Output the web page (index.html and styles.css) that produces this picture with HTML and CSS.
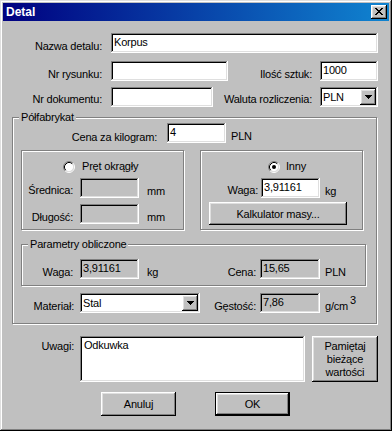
FILE: index.html
```html
<!DOCTYPE html>
<html lang="pl">
<head>
  <meta charset="UTF-8" />
  <title>Detal</title>
  <link rel="stylesheet" href="styles.css">
</head>
<body>
  <div class="window">
    <!-- Title bar -->
    <div class="titlebar">
      <span class="title">Detal</span>
      <span class="btn close-btn">
        <svg width="8" height="7" viewBox="0 0 8 7" shape-rendering="crispEdges"><path d="M0 0h2v1H0zM6 0h2v1H6zM1 1h2v1H1zM5 1h2v1H5zM2 2h4v1H2zM3 3h2v1H3zM2 4h4v1H2zM1 5h2v1H1zM5 5h2v1H5zM0 6h2v1H0zM6 6h2v1H6z"/></svg>
      </span>
    </div>

    <div class="client">
      <div class="row row-wide">
        <span class="lbl cell-a">Nazwa detalu:</span>
        <span class="field f-name">Korpus</span>
      </div>

      <div class="row row-wide r-draw">
        <span class="lbl cell-a">Nr rysunku:</span>
        <span class="field f-draw"></span>
        <span class="lbl cell-b">Ilość sztuk:</span>
        <span class="field f-small">1000</span>
      </div>

      <div class="row row-wide r-doc">
        <span class="lbl lbl-low cell-a">Nr dokumentu:</span>
        <span class="field f-doc"></span>
        <span class="lbl lbl-low cell-b">Waluta rozliczenia:</span>
        <span class="field combo f-small">
          <span class="combo-text">PLN</span>
          <span class="btn drop"><svg width="7" height="4" viewBox="0 0 7 4" shape-rendering="crispEdges"><path d="M0 0h7v1H0zM1 1h5v1H1zM2 2h3v1H2zM3 3h1v1H3z"/></svg></span>
        </span>
      </div>

      <!-- Półfabrykat -->
      <div class="group g-main">
        <span class="legend">Półfabrykat</span>

        <div class="row r-price">
          <span class="lbl lbl-price cell-price">Cena za kilogram:</span>
          <span class="field f-price">4</span>
          <span class="lbl unit u-price">PLN</span>
        </div>

        <div class="inner-row">
          <div class="group box">
            <div class="radio-row r-left">
              <svg class="radio" width="12" height="12" viewBox="0 0 12 12">
                <circle cx="6" cy="6" r="4.5" fill="#fff"/>
                <path d="M2.11 9.89A5.5 5.5 0 0 1 9.89 2.11" fill="none" stroke="#808080"/>
                <path d="M9.89 2.11A5.5 5.5 0 0 1 2.11 9.89" fill="none" stroke="#fff"/>
                <path d="M2.82 9.18A4.5 4.5 0 0 1 9.18 2.82" fill="none" stroke="#000"/>
                <path d="M9.18 2.82A4.5 4.5 0 0 1 2.82 9.18" fill="none" stroke="#dfdfdf"/>
              </svg>
              <span>Pręt okrągły</span>
            </div>
            <div class="row r-sub1">
              <span class="lbl lbl-s cell-c">Średnica:</span>
              <span class="field ro f-val"></span>
              <span class="lbl unit u-mm">mm</span>
            </div>
            <div class="row r-sub2">
              <span class="lbl cell-c">Długość:</span>
              <span class="field ro f-val"></span>
              <span class="lbl unit u-mm">mm</span>
            </div>
          </div>

          <div class="group box">
            <div class="radio-row r-right">
              <svg class="radio" width="12" height="12" viewBox="0 0 12 12">
                <circle cx="6" cy="6" r="4.5" fill="#fff"/>
                <path d="M2.11 9.89A5.5 5.5 0 0 1 9.89 2.11" fill="none" stroke="#808080"/>
                <path d="M9.89 2.11A5.5 5.5 0 0 1 2.11 9.89" fill="none" stroke="#fff"/>
                <path d="M2.82 9.18A4.5 4.5 0 0 1 9.18 2.82" fill="none" stroke="#000"/>
                <path d="M9.18 2.82A4.5 4.5 0 0 1 2.82 9.18" fill="none" stroke="#dfdfdf"/>
                <circle cx="6" cy="6" r="2" fill="#000"/>
              </svg>
              <span>Inny</span>
            </div>
            <div class="row r-sub1">
              <span class="lbl lbl-s cell-d">Waga:</span>
              <span class="field f-val">3,91161</span>
              <span class="lbl unit u-kg">kg</span>
            </div>
            <span class="btn calc">Kalkulator masy...</span>
          </div>
        </div>

        <!-- Parametry obliczone -->
        <div class="group g-calc">
          <span class="legend">Parametry obliczone</span>
          <div class="row r-calc">
            <span class="lbl cell-c">Waga:</span>
            <span class="field ro f-val">3,91161</span>
            <span class="lbl unit u-kg2">kg</span>
            <span class="lbl cell-e">Cena:</span>
            <span class="field ro f-wide">15,65</span>
            <span class="lbl unit u-right">PLN</span>
          </div>
        </div>

        <div class="row r-mat">
          <span class="lbl cell-f">Materiał:</span>
          <span class="field combo f-mat">
            <span class="combo-text">Stal</span>
            <span class="btn drop"><svg width="7" height="4" viewBox="0 0 7 4" shape-rendering="crispEdges"><path d="M0 0h7v1H0zM1 1h5v1H1zM2 2h3v1H2zM3 3h1v1H3z"/></svg></span>
          </span>
          <span class="lbl cell-g">Gęstość:</span>
          <span class="field ro f-wide">7,86</span>
          <span class="lbl unit u-right">g/cm<sup>3</sup></span>
        </div>
      </div>

      <div class="row r-notes">
        <span class="lbl cell-h">Uwagi:</span>
        <span class="field memo">Odkuwka</span>
        <span class="btn remember">Pamiętaj<br>bieżące<br>wartości</span>
      </div>

      <div class="row r-actions">
        <span class="btn action">Anuluj</span>
        <span class="btn action default">OK</span>
      </div>
    </div>
  </div>
</body>
</html>
```

FILE: styles.css
```css
* {
  box-sizing: border-box;
}

body {
  margin: 0;
  background: #c0c0c0;
  color: #000;
  font-family: "Liberation Sans", Arial, sans-serif;
  font-size: 11px;
  letter-spacing: -0.2px;
}

.window {
  width: 392px;
  height: 431px;
  padding: 3px 3px 0 3px;
  background: #c0c0c0;
  box-shadow: inset -1px -1px #000, inset 1px 1px #dfdfdf, inset -2px -2px #808080, inset 2px 2px #fff;
}

.titlebar {
  height: 18px;
  display: flex;
  align-items: center;
  justify-content: space-between;
  padding: 0 2px 0 3px;
  background: linear-gradient(to right, #000080, #1084d0);
  color: #fff;
  font-size: 12px;
  font-weight: bold;
  letter-spacing: 0;
}

.btn {
  background: #c0c0c0;
  box-shadow: inset -1px -1px #000, inset 1px 1px #fff, inset -2px -2px #808080, inset 2px 2px #dfdfdf;
  display: flex;
  align-items: center;
  justify-content: center;
}

.close-btn {
  display: block;
  width: 16px;
  height: 14px;
  padding: 3px 0 0 4px;
}

.close-btn svg {
  display: block;
}

.client {
  padding-top: 12px;
}

/* rows and labels */
.row {
  display: flex;
  height: 20px;
}

.row-wide {
  width: 375px;
}

.lbl {
  line-height: 13px;
  padding-top: 7px;
  white-space: nowrap;
}

.lbl-low {
  padding-top: 6px;
}

.lbl-s {
  padding-top: 6px;
}

.lbl-price {
  padding-top: 8px;
}

.cell-a {
  width: 99px;
  margin-right: 9px;
  text-align: right;
}

.cell-b {
  flex: 1;
  margin-right: 8px;
  text-align: right;
}

.cell-c {
  width: 51px;
  margin-right: 7px;
  text-align: right;
}

.cell-d {
  width: 57px;
  margin-right: 3px;
  text-align: right;
}

.cell-e {
  width: 77px;
  margin-right: 4px;
  text-align: right;
}

.cell-f {
  width: 61px;
  margin-right: 6px;
  text-align: right;
}

.cell-g {
  width: 56px;
  margin-right: 4px;
  text-align: right;
}

.cell-h {
  width: 71px;
  margin-right: 6px;
  padding-top: 4px;
  text-align: right;
}

.cell-price {
  width: 144px;
  margin-right: 10px;
  text-align: right;
}

.unit {
  padding-left: 5px;
}

.u-price {
  padding-left: 5px;
}

.u-mm {
  padding-left: 8px;
}

.u-kg {
  padding-left: 5px;
}

.u-kg2 {
  width: 40px;
  padding-left: 8px;
}

.u-right {
  padding-left: 5px;
}

sup {
  font-size: 11px;
  vertical-align: 6px;
  line-height: 0;
  margin-left: 2px;
}

/* sunken fields */
.field {
  height: 20px;
  padding: 0 3px;
  line-height: 19px;
  background: #fff;
  white-space: nowrap;
  box-shadow: inset -1px -1px #fff, inset 1px 1px #808080, inset -2px -2px #dfdfdf, inset 2px 2px #000;
}

.field.ro {
  background: #c0c0c0;
}

.f-name { width: 267px; }
.f-draw { width: 117px; }
.f-doc { width: 102px; }
.f-small { width: 58px; }
.f-price { width: 59px; }
.f-val { width: 59px; }
.f-wide { width: 60px; }
.f-mat { width: 120px; }

.combo {
  display: flex;
  justify-content: space-between;
  padding: 2px;
  line-height: 16px;
}

.combo-text {
  padding-left: 1px;
}

.drop {
  width: 16px;
  height: 16px;
}

.drop svg {
  display: block;
}

/* group boxes */
.group {
  border: 1px solid #808080;
  box-shadow: inset 1px 1px #fff, 1px 1px #fff;
}

.legend {
  display: block;
  width: max-content;
  height: 13px;
  line-height: 13px;
  margin: -7px 0 -6px 6px;
  padding: 0 2px;
  background: #c0c0c0;
}

.g-main {
  width: 365px;
  height: 207px;
  margin: 10px 0 0 9px;
}

.r-draw {
  margin-top: 8px;
}

.r-doc {
  margin-top: 6px;
}

.r-price {
  margin-top: 5px;
}

.inner-row {
  display: flex;
  gap: 16px;
  margin: 7px 0 0 8px;
}

.box {
  width: 163px;
  height: 80px;
}

.radio-row {
  display: flex;
  align-items: center;
  gap: 7px;
  height: 13px;
  line-height: 13px;
  margin-top: 9px;
}

.radio {
  display: block;
  flex: none;
}

.r-left {
  padding-left: 41px;
}

.r-right {
  padding-left: 67px;
  gap: 6px;
}

.r-sub1 {
  margin-top: 5px;
}

.r-sub2 {
  margin-top: 6px;
}

.calc {
  width: 138px;
  height: 23px;
  margin: 4px 0 0 8px;
}

.g-calc {
  width: 345px;
  height: 42px;
  margin: 14px 0 0 8px;
}

.r-calc {
  margin-top: 14px;
}

.r-mat {
  margin-top: 7px;
}

/* notes and buttons */
.r-notes {
  height: 46px;
  margin-top: 12px;
}

.memo {
  width: 225px;
  height: 46px;
  padding: 2px 4px;
  line-height: 15px;
}

.remember {
  width: 66px;
  height: 46px;
  margin-left: 7px;
  text-align: center;
  line-height: 13px;
}

.r-actions {
  height: 24px;
  margin-top: 10px;
  padding-left: 98px;
  gap: 39px;
}

.action {
  width: 75px;
  height: 24px;
}

.default {
  border: 1px solid #000;
}
```
